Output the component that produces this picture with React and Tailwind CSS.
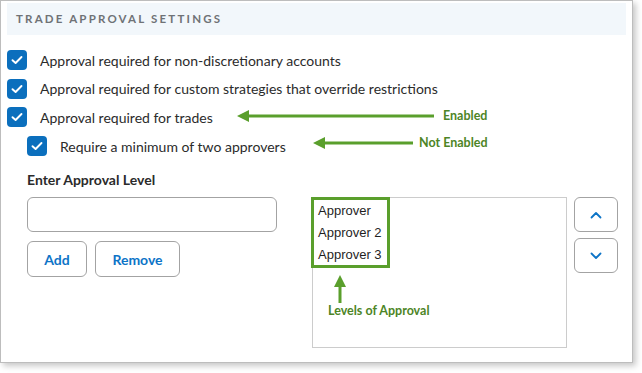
import React from "react";

const Check = ({ className = "" }) => (
  <div className={"flex h-[20px] w-[20px] shrink-0 items-center justify-center rounded-[4px] bg-[#0b6fbd] " + className}>
    <svg width="12" height="10" viewBox="0 0 12 10" fill="none">
      <polyline points="1.5,5.2 4.6,8 10.5,2" stroke="white" strokeWidth="1.9" strokeLinecap="round" strokeLinejoin="round" />
    </svg>
  </div>
);

const HArrow = ({ left, top, width }) => (
  <svg className="absolute" style={{ left, top }} width={width} height="14" viewBox={`0 0 ${width} 14`}>
    <polygon points="0,7 12,1 12,13" fill="#5a9f2c" />
    <rect x="10" y="5.5" width={width - 10} height="3" fill="#5a9f2c" />
  </svg>
);

export default function App() {
  return (
    <div className="bg-white w-[642px] h-[373px]" style={{ fontFamily: "Lato, 'Noto Sans', sans-serif" }}>
      <div className="relative flex h-[363px] w-[633px] flex-col border border-[#bdbdbd] bg-white shadow-[3px_3px_6px_rgba(0,0,0,0.22)]">
        <div className="mx-[6px] mt-[2px] flex h-[32px] items-center bg-[#f2f7fb] pl-[9px]">
          <span className="text-[11.5px] font-bold tracking-[0.19em] text-[#6f7276]">TRADE APPROVAL SETTINGS</span>
        </div>

        <div className="mt-[15px] flex flex-col gap-[8.7px] pl-[6px] text-[14px] text-[#2b2b2b]">
          <div className="flex h-[20px] items-center gap-[13px]">
            <Check />
            <span>Approval required for non-discretionary accounts</span>
          </div>
          <div className="flex h-[20px] items-center gap-[13px]">
            <Check />
            <span>Approval required for custom strategies that override restrictions</span>
          </div>
          <div className="flex h-[20px] items-center gap-[13px]">
            <Check />
            <span>Approval required for trades</span>
          </div>
          <div className="flex h-[20px] items-center gap-[13px] pl-[20px]">
            <Check />
            <span>Require a minimum of two approvers</span>
          </div>
        </div>

        <div className="mt-[14px] flex pl-[26px]">
          <div className="flex w-[250px] flex-col">
            <div className="h-[20px] text-[14px] font-bold leading-[20px] text-[#2b2b2b]">Enter Approval Level</div>
            <div className="mt-[7px] h-[35px] w-[250px] rounded-[6px] border border-[#a3a3a3]" />
            <div className="mt-[9px] flex gap-[8px]">
              <button className="flex h-[36px] w-[60px] items-center justify-center rounded-[6px] border border-[#a3a3a3] text-[14px] font-bold text-[#0d74c7]">Add</button>
              <button className="flex h-[36px] w-[85px] items-center justify-center rounded-[6px] border border-[#a3a3a3] text-[14px] font-bold text-[#0d74c7]">Remove</button>
            </div>
          </div>

          <div className="relative ml-[35px] mt-[27px] h-[151px] w-[255px] border border-[#cccccc]">
            <div className="absolute left-[-2px] top-[-1px] flex h-[71px] w-[79px] flex-col border-[3px] border-[#5a9f2c] pl-[4px] pt-0 text-[13px] leading-[22px] text-[#1f1f1f]" style={{ fontFamily: "'Liberation Sans', Arial, sans-serif" }}>
              <span>Approver</span>
              <span>Approver 2</span>
              <span>Approver 3</span>
            </div>
          </div>

          <div className="ml-[7px] mt-[27px] flex flex-col gap-[6px]">
            <button className="flex h-[35px] w-[44px] items-center justify-center rounded-[6px] border border-[#a3a3a3]">
              <svg width="12" height="8" viewBox="0 0 12 8" fill="none">
                <polyline points="1.5,6.5 6,2 10.5,6.5" stroke="#0d74c7" strokeWidth="1.8" strokeLinecap="round" strokeLinejoin="round" />
              </svg>
            </button>
            <button className="flex h-[35px] w-[44px] items-center justify-center rounded-[6px] border border-[#a3a3a3]">
              <svg width="12" height="8" viewBox="0 0 12 8" fill="none">
                <polyline points="1.5,1.5 6,6 10.5,1.5" stroke="#0d74c7" strokeWidth="1.8" strokeLinecap="round" strokeLinejoin="round" />
              </svg>
            </button>
          </div>
        </div>

        <HArrow left={236} top={108} width={197} />
        <span className="absolute left-[442px] top-[106px] text-[12.5px] font-bold text-[#4d8526]">Enabled</span>
        <HArrow left={312} top={135} width={100} />
        <span className="absolute left-[418px] top-[133px] text-[12.5px] font-bold text-[#4d8526]">Not Enabled</span>

        <svg className="absolute left-[332px] top-[274px]" width="14" height="28" viewBox="0 0 14 28">
          <polygon points="7,0 1,12 13,12" fill="#5a9f2c" />
          <rect x="5.5" y="10" width="3" height="18" fill="#5a9f2c" />
        </svg>
        <span className="absolute left-[327px] top-[301px] text-[12.5px] font-bold text-[#4d8526]">Levels of Approval</span>
      </div>
    </div>
  );
}
